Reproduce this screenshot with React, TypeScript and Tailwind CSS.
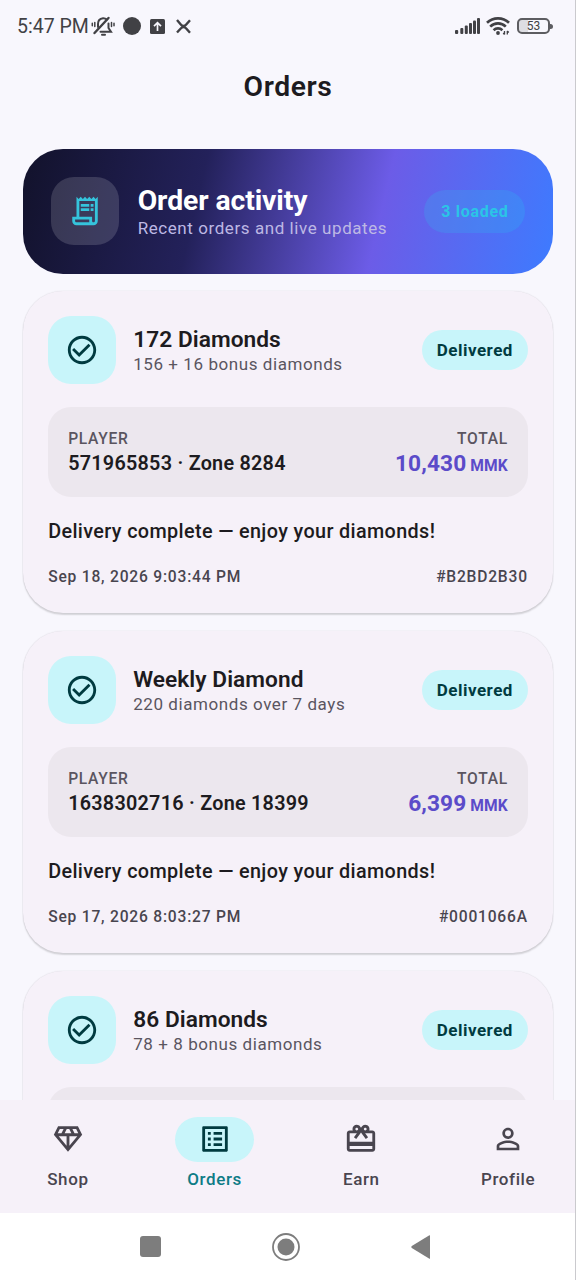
import type { ReactNode } from 'react';
import {
  MdCheckCircleOutline,
  MdOutlineDiamond,
  MdOutlineListAlt,
  MdOutlinePersonOutline,
  MdOutlineReceiptLong,
  MdOutlineRedeem,
} from 'react-icons/md';

type Order = {
  name: string;
  detail: string;
  receipt?: {
    player: string;
    total: string;
    date: string;
    id: string;
  };
};

const orders: Order[] = [
  {
    name: '172 Diamonds',
    detail: '156 + 16 bonus diamonds',
    receipt: {
      player: '571965853 · Zone 8284',
      total: '10,430',
      date: 'Sep 18, 2026 9:03:44 PM',
      id: '#B2BD2B30',
    },
  },
  {
    name: 'Weekly Diamond',
    detail: '220 diamonds over 7 days',
    receipt: {
      player: '1638302716 · Zone 18399',
      total: '6,399',
      date: 'Sep 17, 2026 8:03:27 PM',
      id: '#0001066A',
    },
  },
  {
    name: '86 Diamonds',
    detail: '78 + 8 bonus diamonds',
  },
];

function StatusBar() {
  return (
    <div className="flex h-[52px] shrink-0 items-center justify-between pr-[23px] pl-[17px] text-[#414145]">
      <div className="flex items-center">
        <span className="w-[74px] pt-[2px] text-[19.5px] leading-6 whitespace-nowrap">5:47 PM</span>
        {/* Silent mode */}
        <svg className="h-5 w-6" viewBox="0 0 24 20" fill="none" stroke="currentColor" strokeLinecap="round">
          <path d="M7 11V8C7 5 9 2.6 12 2.3c1.7-.1 2.8.4 3.8 1.3M17.5 7.5v4.500l2.500 3.800H9.500" strokeWidth="2" />
          <path d="M3.500 17 17.500 2" strokeWidth="2.400" />
          <path d="M11 18.800h3" strokeWidth="2" />
          <path d="M3.800 6.500v4M1.300 7.300v2.400M20.500 6.500v4M23 7.300v2.400" strokeWidth="1.500" />
        </svg>
        <span className="ml-2 size-[18px] rounded-full bg-[#414145]" />
        <svg className="ml-[9px] size-[15px]" viewBox="0 0 15 15">
          <rect width="15" height="15" rx="1.5" fill="currentColor" />
          <path d="M7.5 12V4M4 7.2 7.5 3.7 11 7.2" fill="none" stroke="#f8f7fd" strokeWidth="1.7" />
        </svg>
        <svg className="ml-[11px] size-[15px]" viewBox="0 0 15 15" fill="none" stroke="currentColor" strokeWidth="2.4">
          <path d="M1 1 5 5.800q1 1.200 2.500 1.200T10 5.800L14 1.200M1 13.500l4-4.300q1-1.200 2.500-1.200t2.500 1.200l4 4.500" />
        </svg>
      </div>

      <div className="flex items-center">
        <svg className="h-4 w-[25px]" viewBox="0 0 25 16" fill="currentColor">
          <rect x="0" y="12" width="3.2" height="4" rx="1" />
          <rect x="5.3" y="10" width="3" height="6" rx="1" />
          <rect x="9.8" y="7.5" width="3" height="8.5" rx="1" />
          <rect x="14" y="5" width="3" height="11" rx="1" />
          <rect x="18" y="2.5" width="3" height="13.5" rx="1" />
          <rect x="22" y="0" width="3" height="16" rx="1" />
        </svg>
        <svg className="ml-[6px] h-[18px] w-6" viewBox="0 0 24 18" fill="none" stroke="currentColor" strokeWidth="2.7">
          <path d="M1 5.800a16 16 0 0 1 22 0M4.200 9.600a11.200 11.200 0 0 1 15.600 0M7.600 13.200a6.300 6.300 0 0 1 8.800 0" />
          <circle cx="12" cy="16" r="1.9" fill="currentColor" stroke="none" />
          <path d="M18.500 14v3.500M21.300 17.500V14M17.200 16l1.300 1.500M21.300 14l1.500 1.500" strokeWidth="1.3" />
        </svg>
        <div className="ml-[7px] flex h-4 w-[33px] items-center justify-center rounded-[5px] border-2 border-[#5d5d61] bg-linear-to-r from-[#dedee3] from-30% to-transparent to-30% text-[12px] leading-none">
          53
        </div>
        <span className="h-[5px] w-[3px] rounded-r-sm bg-[#5d5d61]" />
      </div>
    </div>
  );
}

function ActivityBanner() {
  return (
    <section className="-mb-[0.5px] flex h-[124.5px] shrink-0 items-center rounded-[40px] bg-[linear-gradient(103.2deg,#12122b_0%,#23215a_33.3%,#6c5ce7_66.7%,#3d7bff_100%)] px-[28px]">
      <div className="flex size-[68px] items-center justify-center rounded-[23px] bg-white/15">
        <MdOutlineReceiptLong className="size-[34px] text-[#35c4dc]" />
      </div>
      <div className="ml-[19px] flex-1 pt-px">
        <h2 className="text-[28.3px] leading-[34px] font-bold tracking-[-0.08px] text-white">Order activity</h2>
        <p className="text-[17px] leading-[21px] tracking-[0.57px] text-[#bdb8e4]">Recent orders and live updates</p>
      </div>
      <span className="flex h-[43px] w-[101px] items-center justify-center rounded-full bg-[#22d3ee]/18 pt-[2px] text-[16px] font-bold tracking-[0.7px] text-[#2bc5e6]">
        3 loaded
      </span>
    </section>
  );
}

function OrderCard({ order }: { order: Order }) {
  const { receipt } = order;

  return (
    <article className="h-[322px] shrink-0 rounded-[40px] bg-[#f6f1f9] px-[25.5px] pt-[25px] shadow-[0_1.5px_1.5px_rgba(0,0,0,0.14),0_0_1.5px_rgba(0,0,0,0.12)]">
      <div className="flex h-[68px] items-center">
        <div className="flex size-[68px] items-center justify-center rounded-[23px] bg-[#c8f5fa]">
          <MdCheckCircleOutline className="size-[34px] text-[#003b40]" />
        </div>
        <div className="ml-[17px] flex-1 pt-px">
          <h3 className="text-[22.7px] leading-[27px] font-semibold tracking-[0.05px] text-[#1d1b20]">{order.name}</h3>
          <p className="text-[17px] leading-[22px] tracking-[0.57px] text-[#5a5560]">{order.detail}</p>
        </div>
        <span className="flex h-10 w-[106px] items-center justify-center rounded-full bg-[#c8f5fa] pt-[2px] text-[17px] font-bold tracking-[0.5px] text-[#003b40]">
          Delivered
        </span>
      </div>

      <div className="mt-[23px] flex h-[90px] items-center justify-between rounded-[23px] bg-[#ece7ee] px-5">
        {receipt && (
          <>
            <div className="pt-[2px]">
              <p className="text-[15.6px] leading-[22px] font-medium tracking-[0.7px] text-[#5a5560]">PLAYER</p>
              <p className="text-[19.8px] leading-[28px] font-semibold tracking-[0.26px] text-[#1d1b20]">
                {receipt.player}
              </p>
            </div>
            <div className="pt-[4px] text-right">
              <p className="text-[15.6px] leading-[22px] font-medium tracking-[0.7px] text-[#5a5560]">TOTAL</p>
              <p className="text-[22.7px] leading-[28px] font-bold tracking-[0.1px] text-[#5b4bc9]">
                {receipt.total}
                <span className="ml-1 text-[15.6px] font-bold">MMK</span>
              </p>
            </div>
          </>
        )}
      </div>

      {receipt && (
        <>
          <p className="mt-[21px] text-[19.8px] leading-[28px] font-medium tracking-[0.37px] text-[#1d1b20]">
            Delivery complete — enjoy your diamonds!
          </p>
          <div className="mt-5 flex justify-between text-[15.6px] leading-[23px] font-medium tracking-[0.79px] text-[#49454f]">
            <span>{receipt.date}</span>
            <span>{receipt.id}</span>
          </div>
        </>
      )}
    </article>
  );
}

function NavItem({ icon, label, active = false }: { icon: ReactNode; label: string; active?: boolean }) {
  return (
    <div className={`flex flex-1 flex-col items-center pt-[17px] ${active ? 'text-[#003b40]' : 'text-[#49454f]'}`}>
      <div
        className={`flex h-[45px] w-[79px] items-center justify-center rounded-full pb-px ${active ? 'bg-[#c8f5fa]' : ''}`}
      >
        {icon}
      </div>
      <span className={`mt-[6px] text-[17px] leading-[22px] font-medium tracking-[0.6px] ${active ? 'text-[#0e7c86]' : ''}`}>
        {label}
      </span>
    </div>
  );
}

export default function App() {
  return (
    <div className="relative flex h-[1280px] w-[576px] flex-col overflow-hidden bg-[#f8f7fd] font-[Roboto,sans-serif]">
      <StatusBar />
      <header className="flex h-[69px] shrink-0 items-center justify-center pt-[2px]">
        <h1 className="text-[28.3px] font-semibold tracking-[0.6px] text-[#1d1b20]">Orders</h1>
      </header>

      <main className="flex min-h-0 flex-1 flex-col gap-[18px] overflow-hidden px-[22.7px] pt-[28px]">
        <ActivityBanner />
        {orders.map((order) => (
          <OrderCard key={order.name} order={order} />
        ))}
      </main>

      <nav className="flex h-[113px] shrink-0 gap-[11px] bg-[#f6f1f9]">
        <NavItem icon={<MdOutlineDiamond className="size-[34px]" />} label="Shop" />
        <NavItem icon={<MdOutlineListAlt className="size-[34px]" />} label="Orders" active />
        <NavItem icon={<MdOutlineRedeem className="size-[34px]" />} label="Earn" />
        <NavItem icon={<MdOutlinePersonOutline className="size-[34px]" />} label="Profile" />
      </nav>

      {/* Android navigation buttons */}
      <div className="flex h-[67px] shrink-0 items-center justify-between bg-white pr-[145px] pl-[140px]">
        <span className="size-[21px] rounded-[3px] bg-[#7d7d7d]" />
        <svg className="size-7" viewBox="0 0 28 28">
          <circle cx="14" cy="14" r="13" fill="none" stroke="#7d7d7d" strokeWidth="1.8" />
          <circle cx="14" cy="14" r="8.5" fill="#7d7d7d" />
        </svg>
        <svg className="h-6 w-5" viewBox="0 0 20 24" fill="#7d7d7d">
          <path d="M19 .5v23q0 .5-1 0L.8 13q-1-1 0-2L18 .5q1-.5 1 0z" />
        </svg>
      </div>

      {/* Screen edge */}
      <div className="absolute inset-y-0 right-0 w-px bg-[#cacace]" />
    </div>
  );
}
